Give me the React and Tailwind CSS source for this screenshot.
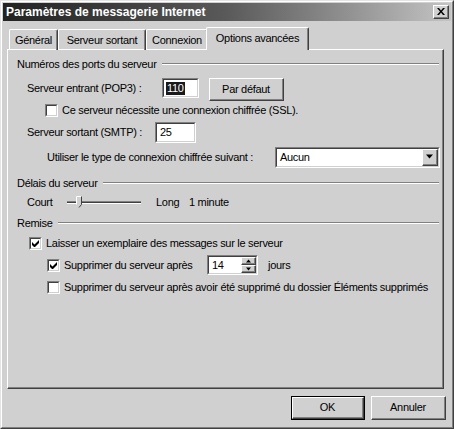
import React from 'react';

const font = "font-['Liberation_Sans',Arial,sans-serif]";

function Check({ checked }) {
  return (
    <div className="h-[13px] w-[13px] shrink-0 border border-t-[#808080] border-l-[#808080] border-r-white border-b-white">
      <div className="flex h-full w-full items-center justify-center border border-t-[#404040] border-l-[#404040] border-r-[#d0d0d0] border-b-[#d0d0d0] bg-white">
        {checked && (
          <svg width="7" height="7" viewBox="0 0 7 7">
            <path d="M0 2v3l2 2h1l4-4V0L2.5 4.5z" fill="#000" />
          </svg>
        )}
      </div>
    </div>
  );
}

function Field({ className = '', children }) {
  return (
    <div className={`border border-t-[#808080] border-l-[#808080] border-r-white border-b-white ${className}`}>
      <div className="flex h-full w-full items-center border border-t-[#404040] border-l-[#404040] border-r-[#d0d0d0] border-b-[#d0d0d0] bg-white">
        {children}
      </div>
    </div>
  );
}

function Raised({ className = '', children }) {
  return (
    <div className={`border border-t-white border-l-white border-r-[#404040] border-b-[#404040] bg-[#d0d0d0] ${className}`}>
      <div className="flex h-full w-full items-center justify-center border-r border-b border-r-[#808080] border-b-[#808080]">
        {children}
      </div>
    </div>
  );
}

function Arrow({ up, size = 7 }) {
  return (
    <svg width={size} height={Math.ceil(size / 2) + 1} viewBox="0 0 7 4">
      <path d={up ? 'M3.5 0L7 4H0z' : 'M0 0h7L3.5 4z'} fill="#000" />
    </svg>
  );
}

function Group({ title, height }) {
  return (
    <div className={`flex items-center pl-[9px] pr-[3px] ${height}`}>
      <span>{title}</span>
      <div className="ml-[5px] flex-1">
        <div className="h-px bg-[#808080]" />
        <div className="h-px bg-white" />
      </div>
    </div>
  );
}

export default function App() {
  const tabs = [
    { label: 'Général', w: 'w-[49px]' },
    { label: 'Serveur sortant', w: 'w-[88px]' },
    { label: 'Connexion', w: 'w-[62px]' },
  ];

  return (
    <div className={`h-[429px] w-[454px] whitespace-nowrap border border-t-[#e4e4e4] border-l-[#e4e4e4] border-r-[#404040] border-b-[#404040] bg-[#d0d0d0] text-[11px] leading-[13px] tracking-[-0.3px] text-black ${font}`}>
      <div className="flex h-full w-full flex-col border border-t-white border-l-white border-r-[#808080] border-b-[#808080] p-px">
        {/* title bar */}
        <div className="flex h-[18px] items-center justify-between bg-gradient-to-r from-[#222222] via-[#5a5a5a] to-[#c4c4c4] pl-[3px] pr-[2px]">
          <span className="text-[12px] font-bold tracking-normal text-white">Paramètres de messagerie Internet</span>
          <Raised className="h-[14px] w-[16px]">
            <svg width="8" height="7" viewBox="0 0 8 7">
              <path d="M0 0h2l2 2.5L6 0h2L5 3.5 8 7H6L4 4.5 2 7H0l3-3.5z" fill="#000" />
            </svg>
          </Raised>
        </div>

        {/* tabs */}
        <div className="relative z-10 ml-[6px] mt-[6px] flex h-[23px] items-start">
          {tabs.map((t) => (
            <div
              key={t.label}
              className={`mt-[2px] flex h-[21px] ${t.w} items-center justify-center rounded-t-[2px] border-t border-l border-r border-t-white border-l-white border-r-[#404040] shadow-[inset_-1px_0_0_#808080]`}
            >
              {t.label}
            </div>
          ))}
          <div className="-ml-[2px] flex h-[23px] w-[103px] items-center justify-center rounded-t-[2px] border-t border-l border-r border-t-white border-l-white border-r-[#404040] bg-[#d0d0d0] pb-[2px] shadow-[inset_-1px_0_0_#808080]">
            Options avancées
          </div>
        </div>

        {/* panel */}
        <div className="-mt-[1px] ml-[4px] h-[340px] w-[437px] border border-t-white border-l-white border-r-[#404040] border-b-[#404040]">
          <div className="h-full w-full border-r border-b border-r-[#808080] border-b-[#808080]">
            <Group title="Numéros des ports du serveur" height="h-[28px]" />

            <div className="flex h-[20px] items-start pl-[19px]">
              <span className="flex h-[20px] w-[135px] items-center">Serveur entrant (POP3) :</span>
              <Field className="h-[20px] w-[37px]">
                <span className="ml-[2px] bg-[#1a1a1a] px-px text-white">110</span>
              </Field>
              <Raised className="ml-[10px] h-[23px] w-[75px]">Par défaut</Raised>
            </div>

            <div className="flex h-[24px] items-center pl-[37px]">
              <Check />
              <span className="ml-[4px]">Ce serveur nécessite une connexion chiffrée (SSL).</span>
            </div>

            <div className="flex h-[20px] items-center pl-[19px]">
              <span className="w-[128px]">Serveur sortant (SMTP) :</span>
              <Field className="h-[21px] w-[41px]">
                <span className="ml-[3px]">25</span>
              </Field>
            </div>

            <div className="flex h-[30px] items-center pl-[39px]">
              <span className="w-[228px]">Utiliser le type de connexion chiffrée suivant :</span>
              <Field className="h-[21px] w-[165px]">
                <span className="ml-[3px] flex-1">Aucun</span>
                <Raised className="h-[17px] w-[16px]">
                  <Arrow />
                </Raised>
              </Field>
            </div>

            <Group title="Délais du serveur" height="h-[22px]" />

            <div className="flex h-[16px] items-center pl-[19px]">
              <span className="w-[40px]">Court</span>
              <div className="relative w-[74px]">
                <div className="h-px bg-[#808080]" />
                <div className="h-px bg-[#404040]" />
                <div className="h-px bg-white" />
                <svg className="absolute -top-[5px] left-[9px]" width="6" height="12" viewBox="0 0 6 12">
                  <path d="M0.5 0.5h5v8l-2.5 3-2.5-3z" fill="#d0d0d0" />
                  <path d="M0.5 8.5V0.5h5" stroke="#fff" fill="none" />
                  <path d="M5.5 0.5v8l-2.5 3" stroke="#404040" fill="none" />
                </svg>
              </div>
              <span className="ml-[15px] w-[33px]">Long</span>
              <span>1 minute</span>
            </div>

            <Group title="Remise" height="h-[26px]" />

            <div className="flex h-[14px] items-center pl-[21px]">
              <Check checked />
              <span className="ml-[4px]">Laisser un exemplaire des messages sur le serveur</span>
            </div>

            <div className="flex h-[30px] items-center pl-[39px]">
              <Check checked />
              <span className="ml-[4px] w-[143px]">Supprimer du serveur après</span>
              <Field className="h-[20px] w-[51px]">
                <span className="ml-[3px] flex-1">14</span>
                <div className="flex h-full w-[15px] flex-col">
                  <Raised className="h-1/2 w-full">
                    <Arrow up size={5} />
                  </Raised>
                  <Raised className="h-1/2 w-full">
                    <Arrow size={5} />
                  </Raised>
                </div>
              </Field>
              <span className="ml-[10px]">jours</span>
            </div>

            <div className="flex h-[14px] items-center pl-[39px]">
              <Check />
              <span className="ml-[4px]">Supprimer du serveur après avoir été supprimé du dossier Éléments supprimés</span>
            </div>
          </div>
        </div>

        {/* buttons */}
        <div className="mt-[7px] flex justify-end gap-[6px] pr-[5px]">
          <div className="h-[24px] w-[74px] border border-black">
            <Raised className="h-full w-full">OK</Raised>
          </div>
          <Raised className="h-[24px] w-[75px]">Annuler</Raised>
        </div>
      </div>
    </div>
  );
}
